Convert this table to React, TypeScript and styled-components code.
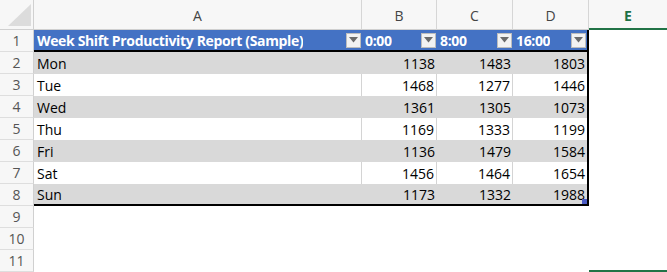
import styled, { createGlobalStyle, css } from 'styled-components'

const GlobalStyle = createGlobalStyle`
  html, body {
    margin: 0;
    padding: 0;
    background: #ffffff;
    overflow: hidden;
  }
  body {
    font-family: "Open Sans", "Liberation Sans", sans-serif;
  }
`

const headers = ['Week Shift Productivity Report (Sample)', '0:00', '8:00', '16:00']

const rows: [string, number, number, number][] = [
  ['Mon', 1138, 1483, 1803],
  ['Tue', 1468, 1277, 1446],
  ['Wed', 1361, 1305, 1073],
  ['Thu', 1169, 1333, 1199],
  ['Fri', 1136, 1479, 1584],
  ['Sat', 1456, 1464, 1654],
  ['Sun', 1173, 1332, 1988],
]

const letters = ['A', 'B', 'C', 'D', 'E']

type Band = 'head' | 'gray' | 'white' | 'empty'

export default function App() {
  return (
    <>
      <GlobalStyle />
      <Sheet>
        <Corner>
          <svg width="34" height="30" viewBox="0 0 34 30">
            <polygon points="8,26 31,26 31,4" fill="#dcdcdc" />
          </svg>
        </Corner>
        {letters.map((l) => (
          <ColHead key={l} $active={l === 'E'}>{l}</ColHead>
        ))}

        <RowHead>1</RowHead>
        {headers.map((h, i) => (
          <Cell key={h} $band="head" $last={i === 3}>
            <HeadText>{h}</HeadText>
            <Filter>
              <svg width="9" height="6" viewBox="0 0 9 6">
                <polygon points="0,0 9,0 4.5,5.5" fill="#6b6b6b" />
              </svg>
            </Filter>
          </Cell>
        ))}
        <Cell $band="empty" />

        {rows.map((r, ri) => {
          const band: Band = ri % 2 === 0 ? 'gray' : 'white'
          const bottom = ri === rows.length - 1
          return [
            <RowHead key={`h${ri}`}>{ri + 2}</RowHead>,
            <Cell key={`a${ri}`} $band={band} $bottom={bottom}>{r[0]}</Cell>,
            ...[r[1], r[2], r[3]].map((v, ci) => (
              <Cell key={`v${ri}${ci}`} $band={band} $bottom={bottom} $last={ci === 2} $num>
                {v}
                {bottom && ci === 2 && <Handle />}
              </Cell>
            )),
            <Cell key={`e${ri}`} $band="empty" />,
          ]
        })}

        {[9, 10, 11].map((n) => [
          <RowHead key={`h${n}`}>{n}</RowHead>,
          ...letters.map((l) => (
            <Cell key={`${l}${n}`} $band="empty" $selected={l === 'E' && n === 11} />
          )),
        ])}
      </Sheet>
    </>
  )
}

const Sheet = styled.div`
  display: grid;
  grid-template-columns: 34px 328px 75px 76px 76px 78px;
  grid-template-rows: 30px repeat(11, 22px);
  width: 667px;
  height: 272px;
  font-size: 14px;
  color: #000;
`

const Corner = styled.div`
  background: #f7f7f7;
  border-right: 1px solid #d0d0d0;
  border-bottom: 1px solid #d0d0d0;
  box-sizing: border-box;
  svg {
    display: block;
  }
`

const ColHead = styled.div<{ $active?: boolean }>`
  display: flex;
  align-items: center;
  justify-content: center;
  background: #f7f7f7;
  color: #444;
  font-size: 14px;
  box-sizing: border-box;
  border-right: 1px solid #d6d6d6;
  border-bottom: 1px solid #d0d0d0;
  padding-top: 1px;
  ${(p) =>
    p.$active &&
    css`
      color: #1e7145;
      font-weight: 700;
      border-bottom: 2px solid #217346;
      border-right: none;
      padding-top: 2px;
    `}
`

const RowHead = styled.div`
  display: flex;
  align-items: center;
  justify-content: center;
  background: #f7f7f7;
  color: #555;
  font-size: 14px;
  box-sizing: border-box;
  border-right: 1px solid #d0d0d0;
  border-bottom: 1px solid #dedede;
`

const bandBg: Record<Band, string> = {
  head: '#4472c4',
  gray: '#d9d9d9',
  white: '#ffffff',
  empty: '#ffffff',
}

const Cell = styled.div<{
  $band: Band
  $num?: boolean
  $last?: boolean
  $bottom?: boolean
  $selected?: boolean
}>`
  position: relative;
  display: flex;
  align-items: center;
  justify-content: ${(p) => (p.$num ? 'flex-end' : 'flex-start')};
  gap: 4px;
  padding: 0 2px 0 3px;
  box-sizing: border-box;
  background: ${(p) => bandBg[p.$band]};
  white-space: nowrap;
  overflow: hidden;
  ${(p) => p.$band === 'white' && !p.$last && css`border-right: 1px solid #d4d4d4;`}
  ${(p) =>
    p.$band === 'head' &&
    css`
      color: #fff;
      font-weight: 700;
      justify-content: space-between;
      border-bottom: 2px solid #000;
      padding-right: 1px;
    `}
  ${(p) => p.$last && css`border-right: 2px solid #000;`}
  ${(p) => p.$bottom && css`border-bottom: 2px solid #000;`}
  ${(p) => p.$selected && css`border-bottom: 2px solid #217346;`}
`

const HeadText = styled.span`
  overflow: hidden;
  letter-spacing: -0.35px;
`

const Filter = styled.span`
  display: flex;
  align-items: center;
  justify-content: center;
  flex: none;
  width: 15px;
  height: 15px;
  box-sizing: border-box;
  background: #f2f2f2;
  border: 1px solid #bdbdbd;
  svg {
    display: block;
  }
`

const Handle = styled.span`
  position: absolute;
  right: 0;
  bottom: 0;
  width: 5px;
  height: 5px;
  background: #4a5bc4;
`
